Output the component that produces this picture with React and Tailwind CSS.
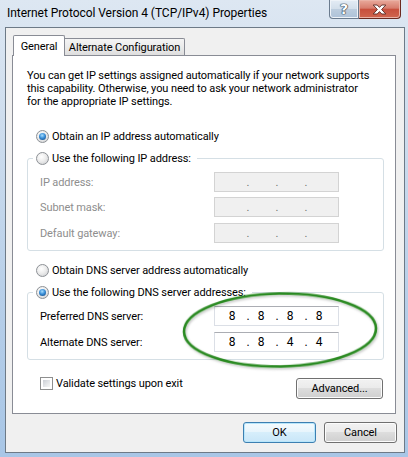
import { Fragment } from 'react';

function Radio({ checked }) {
  return (
    <span className="w-[13px] h-[13px] shrink-0 rounded-full border border-[#8d9196] bg-[radial-gradient(circle_at_40%_35%,#ffffff_0%,#ededed_45%,#c8cacd_100%)] flex items-center justify-center">
      {checked && (
        <span className="w-[7px] h-[7px] rounded-full bg-[radial-gradient(circle_at_45%_35%,#a8deff_0%,#3a8fd8_45%,#0d3c74_100%)]" />
      )}
    </span>
  );
}

function IpBox({ values, disabled }) {
  const v = values || ['', '', '', ''];
  return (
    <div
      className={
        disabled
          ? 'w-[125px] h-[20px] border border-[#d3d3d3] bg-[#f0f0f0] text-[#6f6f6f] flex items-center pl-[8px] text-[11px]'
          : 'w-[125px] h-[20px] border border-[#dbdfe6] border-t-[#abadb3] bg-white text-black flex items-center pl-[8px] text-[12px]'
      }
    >
      {v.map((d, i) => (
        <Fragment key={i}>
          <span className="w-[18px] text-center">{d}</span>
          {i < 3 && <span className="w-[11px] pl-[3px] text-center">.</span>}
        </Fragment>
      ))}
    </div>
  );
}

function Row({ label, disabled, values, className }) {
  return (
    <div className={'flex items-center h-[20px] ' + (className || '')}>
      <span className={'w-[174px] ' + (disabled ? 'text-[#8e8e8e]' : 'text-black')}>{label}</span>
      <IpBox values={values} disabled={disabled} />
    </div>
  );
}

function Button({ children, def, className }) {
  return (
    <div
      className={
        'h-[21px] rounded-[3px] border flex items-center justify-center text-black ' +
        (def
          ? 'border-[#3c7fb1] shadow-[inset_0_0_0_1px_#b8e6fb] bg-[linear-gradient(to_bottom,#f4fbfe_0%,#e8f5fc_45%,#d6eefb_50%,#c9e6f8_100%)] '
          : 'border-[#707070] shadow-[inset_0_0_0_1px_#fcfcfc] bg-[linear-gradient(to_bottom,#f2f2f2_0%,#ebebeb_45%,#dddddd_50%,#cfcfcf_100%)] ') +
        (className || '')
      }
    >
      {children}
    </div>
  );
}

export default function App() {
  return (
    <div className="w-[408px] h-[457px] relative overflow-hidden font-[Roboto,sans-serif] text-[11px] tracking-[-0.1px] leading-[13px] bg-[linear-gradient(to_bottom,#dde7f2_0%,#cfdeee_25%,#b4cde8_70%,#a8c6e6_100%)]">
      {/* Title bar */}
      <div className="h-[27px] flex justify-between items-start">
        <div className="h-[27px] flex items-center pl-[7px] text-[12px] tracking-[-0.05px] text-black">
          Internet Protocol Version 4 (TCP/IPv4) Properties
        </div>
        <div className="flex mr-[7px]">
          <div className="w-[30px] h-[19px] border border-t-0 border-[#6a7b8e] rounded-bl-[4px] shadow-[inset_0_0_0_1px_#eef3f8] bg-[linear-gradient(to_bottom,#e4ecf5_0%,#d3dfeb_48%,#bccdde_52%,#aec2d8_100%)] flex items-center justify-center">
            <span className="text-white font-bold text-[14px] leading-none font-['DejaVu_Sans',sans-serif] [text-shadow:0_0_1px_#2f3d4c,0_0_1px_#2f3d4c,0_0_1px_#2f3d4c,0_0_1px_#2f3d4c]">?</span>
          </div>
          <div className="w-[42px] h-[19px] border border-t-0 border-l-0 border-[#6b2a20] rounded-br-[4px] shadow-[inset_0_0_0_1px_#eab2a6] bg-[linear-gradient(to_bottom,#e9aa9c_0%,#d77d6d_45%,#c8503d_52%,#d0664f_100%)] flex items-center justify-center">
            <svg width="15" height="11" viewBox="0 0 15 11">
              <path
                d="M1.2 1 H5.2 L7.5 3.4 L9.8 1 H13.8 L9.6 5.5 L13.8 10 H9.8 L7.5 7.6 L5.2 10 H1.2 L5.4 5.5 Z"
                fill="#ffffff"
                stroke="#5a2a24"
                strokeWidth="0.9"
                strokeLinejoin="round"
              />
            </svg>
          </div>
        </div>
      </div>

      {/* Client area */}
      <div className="ml-[5px] w-[400px] h-[426px] border border-[#6d7a87] bg-[#f0f0f0] pt-[7px]">
        {/* Tabs */}
        <div className="ml-[6px] h-[20px] flex items-end">
          <div className="ml-[1px] w-[52px] h-[21px] mb-[-1px] relative z-10 border border-b-0 border-[#898c95] rounded-t-[2px] bg-white flex items-center justify-center text-black">
            General
          </div>
          <div className="w-[120px] h-[17px] border border-l-0 border-b-0 border-[#898c95] rounded-tr-[2px] bg-[linear-gradient(to_bottom,#f4f4f4_0%,#ebebeb_50%,#dedede_100%)] flex items-center justify-center text-black">
            Alternate Configuration
          </div>
        </div>

        {/* Panel */}
        <div className="ml-[6px] w-[384px] h-[359px] border border-[#898c95] bg-white pt-[13px] pl-[14px] pr-[11px] flex flex-col text-black">
          <div className="whitespace-nowrap">
            <div>You can get IP settings assigned automatically if your network supports</div>
            <div>this capability. Otherwise, you need to ask your network administrator</div>
            <div>for the appropriate IP settings.</div>
          </div>

          <div className="mt-[22px] ml-[9px] h-[13px] flex items-center gap-[3px]">
            <Radio checked />
            <span>Obtain an IP address automatically</span>
          </div>

          <fieldset className="mt-[8px] border border-[#d5dfe5] rounded-[3px] p-0 m-0 min-w-0">
            <legend className="ml-[5px] px-[3px] p-0">
              <span className="h-[14px] flex items-center gap-[3px] pr-[3px]">
                <Radio />
                <span>Use the following IP address:</span>
              </span>
            </legend>
            <div className="pl-[12px] pt-[7px] pb-[7px]">
              <Row label="IP address:" disabled />
              <Row label="Subnet mask:" disabled className="mt-[5px]" />
              <Row label="Default gateway:" disabled className="mt-[6px]" />
            </div>
          </fieldset>

          <div className="mt-[13px] ml-[9px] h-[13px] flex items-center gap-[3px]">
            <Radio />
            <span>Obtain DNS server address automatically</span>
          </div>

          <fieldset className="mt-[8px] border border-[#d5dfe5] rounded-[3px] p-0 m-0 min-w-0">
            <legend className="ml-[5px] px-[3px] p-0">
              <span className="h-[14px] flex items-center gap-[3px] pr-[3px]">
                <Radio checked />
                <span>Use the following DNS server addresses:</span>
              </span>
            </legend>
            <div className="pl-[12px] pt-[7px] pb-[7px]">
              <Row label="Preferred DNS server:" values={['8', '8', '8', '8']} />
              <Row label="Alternate DNS server:" values={['8', '8', '4', '4']} className="mt-[6px]" />
            </div>
          </fieldset>

          <div className="mt-[17px] flex justify-between items-start">
            <div className="ml-[13px] h-[13px] flex items-center gap-[3px]">
              <span className="w-[13px] h-[13px] border border-[#8e8f8f] bg-white p-[2px] flex">
                <span className="flex-1 bg-[linear-gradient(135deg,#cbcfd5_0%,#e6e8ea_60%,#f6f6f6_100%)]" />
              </span>
              <span>Validate settings upon exit</span>
            </div>
            <Button className="mt-[1px] w-[87px] mr-[1px]">Advanced...</Button>
          </div>
        </div>

        {/* Bottom buttons */}
        <div className="mt-[8px] flex justify-end gap-[8px] pr-[7px]">
          <Button def className="w-[73px]">OK</Button>
          <Button className="w-[73px]">Cancel</Button>
        </div>
      </div>

      {/* Green hand-drawn ellipse annotation */}
      <svg className="absolute left-[180px] top-[290px] pointer-events-none" width="204" height="82" viewBox="0 0 204 82">
        <defs>
          <filter id="sh" x="-10%" y="-20%" width="120%" height="140%">
            <feDropShadow dx="1" dy="1.5" stdDeviation="1.2" floodColor="#000000" floodOpacity="0.25" />
          </filter>
        </defs>
        <ellipse cx="100" cy="40" rx="96" ry="36.5" fill="none" stroke="#2b8a22" strokeWidth="2.6" filter="url(#sh)" transform="rotate(-1 100 40)" />
      </svg>
    </div>
  );
}
